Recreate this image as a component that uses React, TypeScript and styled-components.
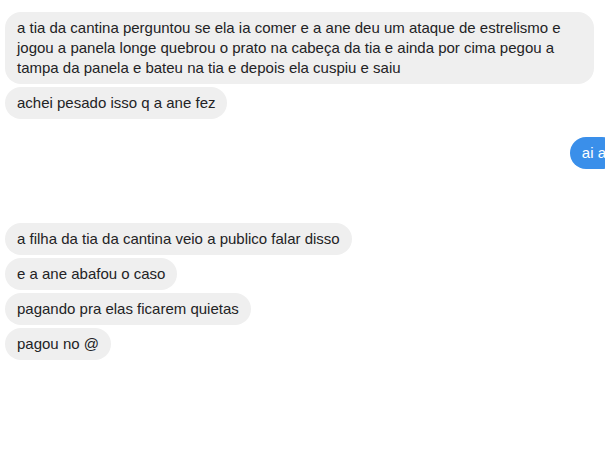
import React from "react";
import styled, { createGlobalStyle } from "styled-components";

const Global = createGlobalStyle`
  html, body { margin: 0; padding: 0; background: #ffffff; overflow: hidden; }
  body { font-family: "Liberation Sans", Arial, Helvetica, sans-serif; }
`;

const Thread = styled.div`
  display: flex;
  flex-direction: column;
  padding: 12px 0 0 5px;
  width: 600px;
`;

const Group = styled.div<{ $side: "in" | "out"; $gapAfter: number }>`
  display: flex;
  flex-direction: column;
  align-items: ${(p) => (p.$side === "out" ? "flex-end" : "flex-start")};
  gap: 3px;
  margin-bottom: ${(p) => p.$gapAfter}px;
`;

const Bubble = styled.div<{ $side: "in" | "out" }>`
  box-sizing: border-box;
  max-width: 589px;
  padding: 6px 12px;
  border-radius: 16px;
  font-size: 15px;
  line-height: 20px;
  white-space: pre-wrap;
  background: ${(p) => (p.$side === "out" ? "#3a8fea" : "#efefef")};
  color: ${(p) => (p.$side === "out" ? "#ffffff" : "#232325")};
  margin-right: ${(p) => (p.$side === "out" ? "-13px" : "0")};
`;

const groups: { side: "in" | "out"; gap: number; msgs: string[] }[] = [
  {
    side: "in",
    gap: 18,
    msgs: [
      "a tia da cantina perguntou se ela ia comer e a ane deu um ataque de estrelismo e jogou a panela longe quebrou o prato na cabeça da tia e ainda por cima pegou a tampa da panela e bateu na tia e depois ela cuspiu e saiu",
      "achei pesado isso q a ane fez",
    ],
  },
  { side: "out", gap: 54, msgs: ["ai a"] },
  {
    side: "in",
    gap: 0,
    msgs: [
      "a filha da tia da cantina veio a publico falar disso",
      "e a ane abafou o caso",
      "pagando pra elas ficarem quietas",
      "pagou no @",
    ],
  },
];

export default function App() {
  return (
    <>
      <Global />
      <Thread>
        {groups.map((g, i) => (
          <Group key={i} $side={g.side} $gapAfter={g.gap}>
            {g.msgs.map((m, j) => (
              <Bubble key={j} $side={g.side}>
                {m}
              </Bubble>
            ))}
          </Group>
        ))}
      </Thread>
    </>
  );
}
